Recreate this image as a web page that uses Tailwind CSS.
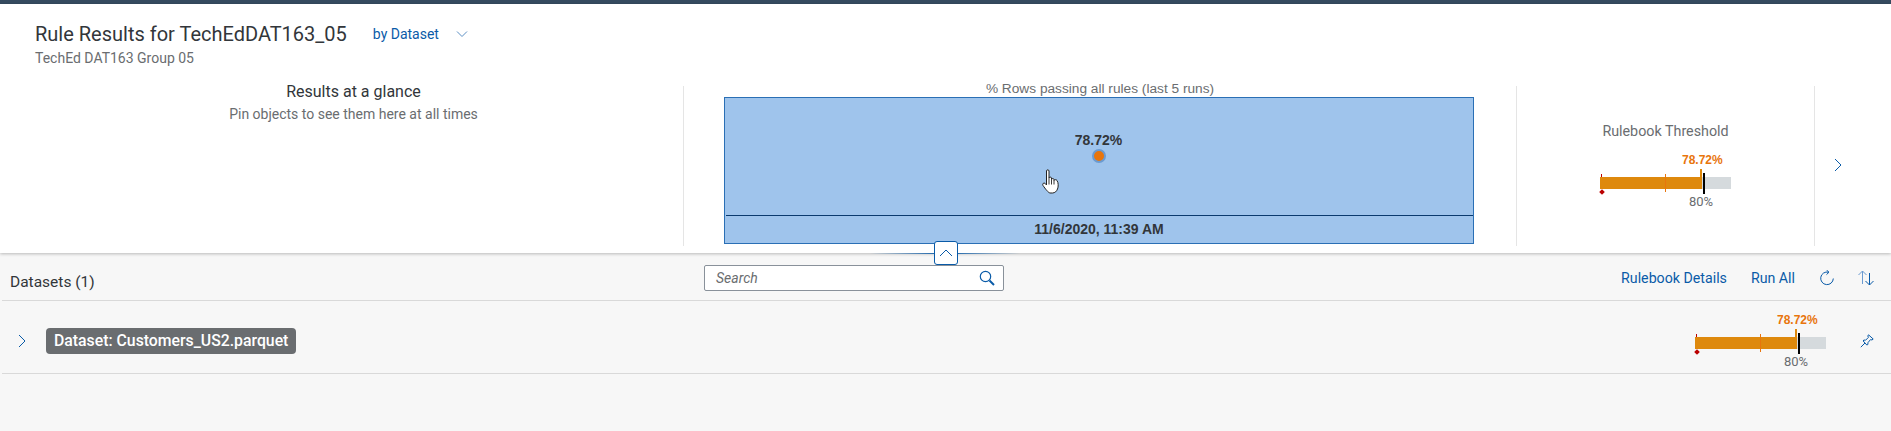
<!DOCTYPE html>
<html>
<head>
<meta charset="utf-8">
<script src="https://cdn.jsdelivr.net/npm/@tailwindcss/browser@4"></script>
</head>
<body class="m-0 overflow-hidden">
<div class="relative w-[1891px] h-[431px] flex flex-col bg-[#f7f7f7] font-['Roboto',sans-serif] overflow-hidden">
  <div class="h-[4px] bg-[#354a5f] shrink-0"></div>
  <!-- header -->
  <header class="relative z-10 h-[249px] shrink-0 bg-white shadow-[0_1px_3px_rgba(0,0,0,0.25)] flex flex-col">
    <div class="h-[54px] pl-[35px] pt-[18px] shrink-0">
      <div class="flex items-center h-[24px]">
        <h1 class="text-[20px] leading-[24px] text-[#32363a] font-normal">Rule Results for TechEdDAT163_05</h1>
        <span class="ml-[26px] text-[14px] text-[#0a5ba8]">by Dataset</span>
        <svg class="ml-[17px]" width="12" height="8" viewBox="0 0 12 8" fill="none" stroke="#5b8fc4" stroke-width="1"><path d="M1 1.5 L6 6.5 L11 1.5"/></svg>
      </div>
      <div class="text-[14px] leading-[16px] mt-[4px] text-[#6a6d70]">TechEd DAT163 Group 05</div>
    </div>
    <div class="flex flex-1 pb-[7px] mt-[28px]">
      <div class="w-[684px] border-r border-[#e5e5e5] flex flex-col items-center pl-[24px]">
        <div class="text-[16px] leading-[20px] mt-[-4px] text-[#32363a]">Results at a glance</div>
        <div class="text-[14px] leading-[18px] mt-[3px] text-[#6a6d70]">Pin objects to see them here at all times</div>
      </div>
      <div class="w-[832px] flex flex-col px-[40px] mt-[-6px]">
        <div class="text-[13.7px] leading-[16px] mt-[1px] text-center text-[#6a6d70] shrink-0 font-['Liberation_Sans',sans-serif]">% Rows passing all rules (last 5 runs)</div>
        <div class="w-[750px] h-[147px] bg-[#9fc4ec] border border-[#2a6fb5] flex flex-col font-['Liberation_Sans',sans-serif] shrink-0">
          <div class="flex-1 flex flex-col items-center pt-[34px] border-b border-[#0a3a6e] ml-[1px] pr-[2px]">
            <span class="text-[14px] leading-[16px] font-bold text-[#32363a]">78.72%</span>
            <span class="mt-[1px] w-[14px] h-[14px] rounded-full bg-[#e8750c] border-2 border-[#6b9bd1]"></span>
          </div>
          <div class="h-[27px] flex items-center justify-center text-[14px] font-bold text-[#32363a]">11/6/2020, 11:39 AM</div>
        </div>
      </div>
      <div class="w-[299px] border-x border-[#e5e5e5] flex flex-col items-center">
        <div class="text-[14.3px] leading-[18px] mt-[36px] text-[#6a6d70]">Rulebook Threshold</div>
        <div class="relative w-[131px] h-[56px] mt-[13px]">
          <span class="absolute left-[82px] top-0 text-[12px] leading-[14px] font-bold text-[#e8750c] font-['Liberation_Sans',sans-serif]">78.72%</span>
          <div class="absolute left-0 top-[24px] w-[131px] h-[12px] bg-[#d5dadd]"></div>
          <div class="absolute left-0 top-[24px] w-[102px] h-[12px] bg-[#de890d]"></div>
          <div class="absolute left-[100px] top-[16px] w-[2px] h-[8px] bg-[#de890d]"></div>
          <div class="absolute left-[65px] top-[21px] w-[1px] h-[18px] bg-[#e8750c]"></div>
          <div class="absolute left-[1px] top-[21px] w-[1px] h-[3px] bg-[#bb0000]"></div>
          <div class="absolute left-[0px] top-[37px] w-[4px] h-[4px] bg-[#bb0000] rotate-45"></div>
          <div class="absolute left-[103px] top-[20px] w-[2px] h-[21px] bg-black"></div>
          <span class="absolute left-[89px] top-[42px] text-[13px] leading-[14px] text-[#6a6d70]">80%</span>
        </div>
      </div>
      <div class="flex-1 flex justify-center pt-[72px] pr-[31px]">
        <svg width="8" height="14" viewBox="0 0 8 14" fill="none" stroke="#0a5ba8" stroke-width="1"><path d="M1 1 L7 7 L1 13"/></svg>
      </div>
    </div>
  </header>
  <!-- toolbar -->
  <div class="relative h-[48px] shrink-0 ml-[2px] border-b border-[#d9d9d9] flex items-center">
    <span class="ml-[8px] mt-[12px] text-[15.5px] text-[#32363a]">Datasets (1)</span>
    <div class="absolute left-[702px] top-[12px] w-[300px] h-[26px] bg-white border border-[#89919a] rounded-[2px] flex items-center pl-[11px] pr-[8px] justify-between">
      <span class="text-[14px] italic text-[#6a6d70]">Search</span>
      <svg width="16" height="16" viewBox="0 0 16 16" fill="none" stroke="#0a5ba8"><circle cx="6.5" cy="6.5" r="5.2" stroke-width="1.2"/><path d="M10.5 10.5 L15 15" stroke-width="2"/></svg>
    </div>
    <div class="ml-auto flex items-center text-[14.2px] text-[#0a5ba8] pr-[16px] mt-[4px]">
      <span>Rulebook Details</span>
      <span class="ml-[24px]">Run All</span>
      <svg class="ml-[24px]" width="16" height="16" viewBox="0 0 16 16" fill="none" stroke="#0a5ba8" stroke-width="1"><path d="M9.5 2.2 A6.3 6.3 0 1 0 14.3 8.5"/><path d="M7.5 0 L10 2.2 L7.5 4.6"/></svg>
      <svg class="ml-[22px]" width="18" height="16" viewBox="0 0 18 16" fill="none" stroke-width="1"><path d="M5.5 14 V1 M1.5 5 L5.5 1 L9.5 5" stroke="#6b9bd1"/><path d="M12.5 3 V15 M8.5 11 L12.5 15 L16.5 11" stroke="#0a5ba8"/></svg>
    </div>
  </div>
  <!-- row -->
  <div class="relative h-[73px] shrink-0 ml-[2px] border-b border-[#d9d9d9] flex items-center pt-[7px]">
    <svg class="ml-[16px]" width="8" height="14" viewBox="0 0 8 14" fill="none" stroke="#0a5ba8" stroke-width="1"><path d="M1 1 L7 7 L1 13"/></svg>
    <span class="ml-[20px] h-[26px] px-[8px] flex items-center rounded-[4px] bg-[#6a6d70] text-white text-[15.8px] font-medium">Dataset: Customers_US2.parquet</span>
    <div class="relative w-[131px] h-[56px] ml-auto mr-[34px]">
      <span class="absolute left-[82px] top-0 text-[12px] leading-[14px] font-bold text-[#e8750c] font-['Liberation_Sans',sans-serif]">78.72%</span>
      <div class="absolute left-0 top-[24px] w-[131px] h-[12px] bg-[#d5dadd]"></div>
      <div class="absolute left-0 top-[24px] w-[102px] h-[12px] bg-[#de890d]"></div>
      <div class="absolute left-[100px] top-[16px] w-[2px] h-[8px] bg-[#de890d]"></div>
      <div class="absolute left-[65px] top-[21px] w-[1px] h-[18px] bg-[#e8750c]"></div>
      <div class="absolute left-[1px] top-[21px] w-[1px] h-[3px] bg-[#bb0000]"></div>
      <div class="absolute left-[0px] top-[37px] w-[4px] h-[4px] bg-[#bb0000] rotate-45"></div>
      <div class="absolute left-[103px] top-[20px] w-[2px] h-[21px] bg-black"></div>
      <span class="absolute left-[89px] top-[42px] text-[13px] leading-[14px] text-[#6a6d70]">80%</span>
    </div>
    <svg class="mr-[17px]" width="14" height="14" viewBox="0 0 14 14" fill="none" stroke="#0a5ba8" stroke-width="1"><path d="M8.5 0.8 L13.2 5 L12 6 L10.5 5.6 L8 8.6 L7.8 10.6 L6.8 11 L3.2 7 L3.8 6 L5.6 6.2 L8.4 3.4 L7.8 2 Z"/><path d="M5 9 L0.8 13.2"/></svg>
  </div>
  <!-- collapse toggle -->
  <div class="absolute z-20 left-[870px] top-[253px] w-[150px] h-[1px] bg-gradient-to-r from-transparent via-[#0a5ba8] to-transparent"></div>
  <button class="absolute z-20 left-[934px] top-[241px] w-[24px] h-[24px] bg-white border border-[#0a5ba8] rounded-[3px] flex items-center justify-center">
    <svg width="14" height="8" viewBox="0 0 14 8" fill="none" stroke="#0a5ba8" stroke-width="1"><path d="M1 7 L7 1 L13 7"/></svg>
  </button>
  <!-- mouse cursor -->
  <svg class="absolute z-30 left-[1042px] top-[169px]" width="19" height="25" viewBox="0 0 19 25"><path d="M4.5 2 C4.5 0.4 7 0.4 7 2 V9 C7 7.8 9.5 7.8 9.5 9 V10.5 C9.5 9.3 12 9.3 12 10.5 V11.5 C12 10.4 14.5 10.4 15 11.5 C16.5 13.5 16.5 18 15.5 20 C14.5 22.5 13 23.8 10.5 24 H8 C6 23.5 3.5 20 1 16.5 C0 14.8 1.8 13.2 3.2 14.5 L4.5 16 Z" fill="white" stroke="#222" stroke-width="1"/><path d="M7 9 V15.5 M9.5 10.5 V15.5 M12 11.5 V15.5" stroke="#222" stroke-width="0.9"/></svg>
</div>
</body>
</html>
